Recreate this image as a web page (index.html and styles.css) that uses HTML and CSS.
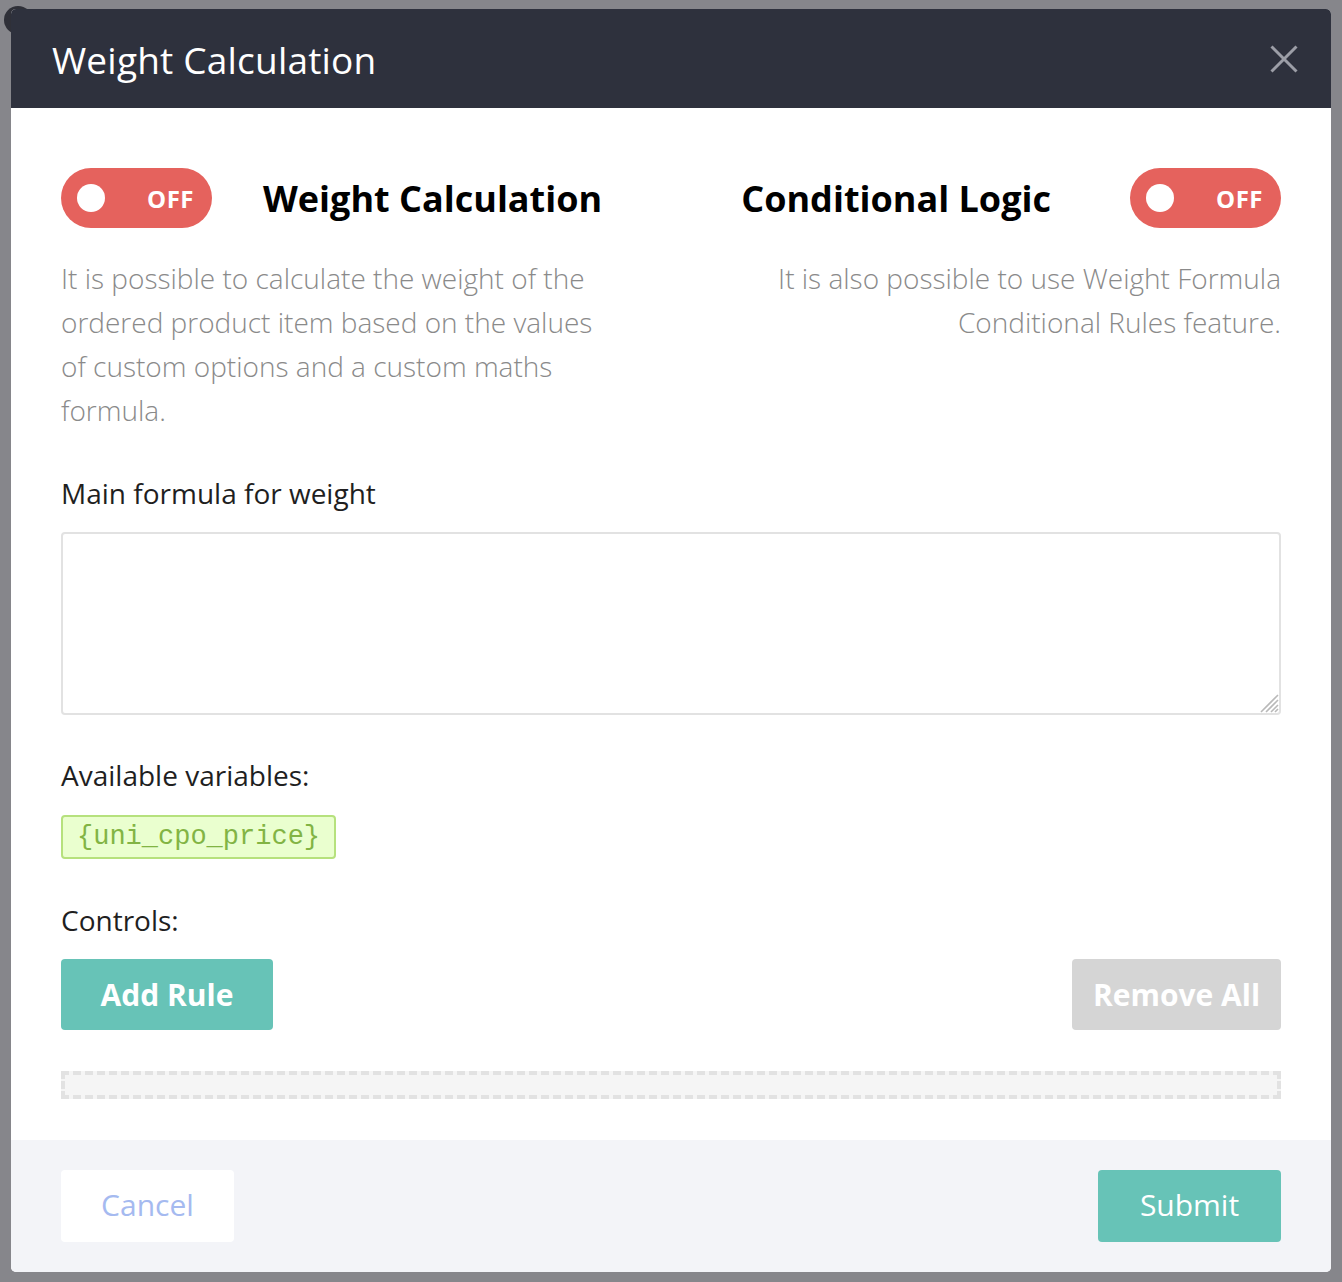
FILE: index.html
```html
<!DOCTYPE html>
<html lang="en">
<head>
<meta charset="utf-8">
<title>Weight Calculation</title>
<link rel="stylesheet" href="styles.css">
</head>
<body>
<div class="backdrop">
  <span class="bg-dot"></span>
  <div class="modal">
    <div class="modal-header">
      <h1 class="modal-title">Weight Calculation</h1>
      <button class="close-btn" aria-label="Close">
        <svg width="28" height="28" viewBox="0 0 28 28"><path d="M1.5 1.5 L26.5 26.5 M26.5 1.5 L1.5 26.5" stroke="#9c9ea7" stroke-width="3" fill="none"/></svg>
      </button>
    </div>
    <div class="modal-body">
      <div class="columns">
        <div class="col col-left">
          <div class="col-head">
            <span class="switch"><span class="knob"></span><span class="switch-label">OFF</span></span>
            <h2 class="col-title">Weight Calculation</h2>
          </div>
          <p class="desc desc-left">It is possible to calculate the weight of the ordered product item based on the values of custom options and a custom maths formula.</p>
        </div>
        <div class="col col-right">
          <div class="col-head head-right">
            <h2 class="col-title">Conditional Logic</h2>
            <span class="switch"><span class="knob"></span><span class="switch-label">OFF</span></span>
          </div>
          <p class="desc desc-right">It is also possible to use Weight Formula Conditional Rules feature.</p>
        </div>
      </div>
      <label class="field-label label-formula">Main formula for weight</label>
      <div class="formula-wrap">
        <textarea class="formula"></textarea>
        <svg class="grip" width="22" height="22" viewBox="0 0 22 22"><path d="M4 21 L21 4 M9 21 L21 9 M14 21 L21 14 M18 21 L21 18" stroke="#b9b9b9" stroke-width="1.6" fill="none"/></svg>
      </div>
      <div class="field-label label-vars">Available variables:</div>
      <div class="vars"><span class="var-tag">{uni_cpo_price}</span></div>
      <div class="field-label label-controls">Controls:</div>
      <div class="controls">
        <button class="btn btn-add">Add Rule</button>
        <button class="btn btn-remove">Remove All</button>
      </div>
      <div class="rules-drop"></div>
    </div>
    <div class="modal-footer">
      <button class="fbtn fbtn-cancel">Cancel</button>
      <button class="fbtn fbtn-submit">Submit</button>
    </div>
  </div>
</div>
</body>
</html>
```
FILE: styles.css
```css
* { box-sizing: border-box; }
html, body { margin: 0; padding: 0; }
body {
  font-family: "Open Sans", "Liberation Sans", sans-serif;
  background: #86868b;
  width: 1342px;
  height: 1282px;
  overflow: hidden;
}
.backdrop {
  position: relative;
  width: 1342px;
  height: 1282px;
  padding: 9px 11px 10px 11px;
}
.bg-dot {
  position: absolute;
  left: 4px;
  top: 6px;
  width: 28px;
  height: 28px;
  border-radius: 50%;
  background: #2f3038;
}
.modal {
  position: relative;
  width: 1320px;
  height: 1263px;
  background: #fff;
  border-radius: 5px;
  overflow: hidden;
  display: flex;
  flex-direction: column;
}
.modal-header {
  height: 99px;
  background: #2e313d;
  display: flex;
  align-items: center;
  justify-content: space-between;
  padding: 0 33px 0 41px;
}
.modal-title {
  margin: 0;
  color: #fff;
  font-weight: 400;
  font-size: 37px;
  letter-spacing: 0.2px;
  line-height: 1;
  padding-top: 2px;
}
.close-btn {
  background: none;
  border: 0;
  padding: 0;
  width: 28px;
  height: 28px;
  display: flex;
}
.modal-body {
  flex: 1;
  padding: 60px 50px 0 50px;
}
.columns {
  display: grid;
  grid-template-columns: 600px 600px;
  column-gap: 20px;
}
.col-head {
  display: flex;
  align-items: center;
  gap: 51px;
  height: 60px;
}
.head-right {
  justify-content: flex-end;
  gap: 79px;
}
.switch {
  position: relative;
  flex: none;
  width: 151px;
  height: 60px;
  border-radius: 30px;
  background: #e5625d;
  display: flex;
  align-items: center;
  justify-content: flex-end;
  padding-right: 18px;
}
.knob {
  position: absolute;
  left: 16px;
  top: 16px;
  width: 28px;
  height: 28px;
  border-radius: 50%;
  background: #fff;
}
.switch-label {
  color: #fff;
  font-weight: 700;
  font-size: 24px;
  letter-spacing: 0.5px;
}
.col-title {
  margin: 0;
  font-size: 36px;
  font-weight: 700;
  color: #000;
  line-height: 1;
  padding-top: 2px;
}
.desc {
  margin: 28px 0 0 0;
  font-size: 28px;
  font-weight: 300;
  line-height: 44px;
  color: #8a8a8a;
}
.desc-left { max-width: 550px; }
.desc-right { text-align: right; }
.field-label {
  display: block;
  font-size: 28px;
  color: #1f1f1f;
  line-height: 36px;
}
.label-formula { margin-top: 43px; }
.formula-wrap {
  position: relative;
  margin-top: 21px;
  width: 1220px;
  height: 183px;
}
.formula {
  display: block;
  width: 1220px;
  height: 183px;
  border: 2px solid #e2e2e2;
  border-radius: 4px;
  resize: none;
  font-family: inherit;
  font-size: 22px;
}
.grip {
  position: absolute;
  right: 2px;
  bottom: 2px;
  pointer-events: none;
}
.label-vars { margin-top: 42px; }
.vars { margin-top: 22px; display: flex; }
.var-tag {
  display: inline-block;
  height: 44px;
  padding: 0 14px;
  border: 2px solid #b6e17d;
  border-radius: 4px;
  background: #eaffcf;
  color: #82b444;
  font-family: "Liberation Mono", monospace;
  font-size: 27px;
  line-height: 40px;
}
.label-controls { margin-top: 43px; }
.controls {
  margin-top: 21px;
  display: flex;
  justify-content: space-between;
}
.btn {
  border: 0;
  height: 71px;
  border-radius: 4px;
  font-family: inherit;
  font-weight: 700;
  font-size: 30px;
  color: #fff;
  padding: 0;
}
.btn-add { width: 212px; background: #67c3b7; }
.btn-remove { width: 209px; background: #d5d5d5; }
.rules-drop {
  margin-top: 41px;
  height: 28px;
  background: #f5f5f5;
  border: 4px dashed #e2e2e2;
}
.modal-footer {
  height: 132px;
  background: #f3f4f8;
  padding: 30px 50px 0 50px;
  display: flex;
  justify-content: space-between;
  align-items: flex-start;
}
.fbtn {
  border: 0;
  height: 72px;
  border-radius: 4px;
  font-family: inherit;
  font-size: 30px;
  font-weight: 400;
  padding: 0 0 4px 0;
}
.fbtn-cancel { width: 173px; background: #fff; color: #a5baf0; }
.fbtn-submit { width: 183px; background: #67c3b7; color: #fff; }
```
